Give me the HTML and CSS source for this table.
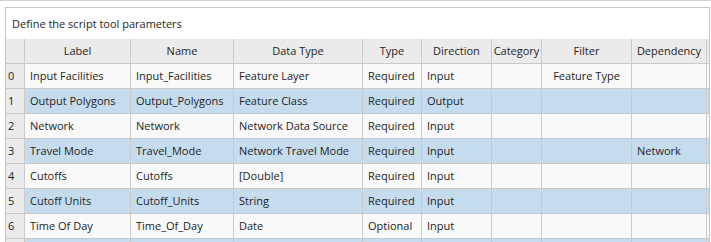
FILE: index.html
```html
<!DOCTYPE html>
<html>
<head>
<meta charset="utf-8">
<link rel="stylesheet" href="styles.css">
</head>
<body>
<div class="topline"></div>
<div class="panel">
  <div class="title">Define the script tool parameters</div>
  <div class="grid">
    <div class="row head">
      <div class="c idx"></div>
      <div class="c">Label</div>
      <div class="c">Name</div>
      <div class="c">Data Type</div>
      <div class="c">Type</div>
      <div class="c">Direction</div>
      <div class="c">Category</div>
      <div class="c">Filter</div>
      <div class="c">Dependency</div>
      <div class="c"></div>
    </div>
    <div class="row">
      <div class="c idx">0</div>
      <div class="c">Input Facilities</div>
      <div class="c">Input_Facilities</div>
      <div class="c">Feature Layer</div>
      <div class="c">Required</div>
      <div class="c">Input</div>
      <div class="c"></div>
      <div class="c ctr">Feature Type</div>
      <div class="c"></div>
      <div class="c"></div>
    </div>
    <div class="row alt">
      <div class="c idx">1</div>
      <div class="c">Output Polygons</div>
      <div class="c">Output_Polygons</div>
      <div class="c">Feature Class</div>
      <div class="c">Required</div>
      <div class="c">Output</div>
      <div class="c"></div>
      <div class="c"></div>
      <div class="c"></div>
      <div class="c"></div>
    </div>
    <div class="row">
      <div class="c idx">2</div>
      <div class="c">Network</div>
      <div class="c">Network</div>
      <div class="c">Network Data Source</div>
      <div class="c">Required</div>
      <div class="c">Input</div>
      <div class="c"></div>
      <div class="c"></div>
      <div class="c"></div>
      <div class="c"></div>
    </div>
    <div class="row alt">
      <div class="c idx">3</div>
      <div class="c">Travel Mode</div>
      <div class="c">Travel_Mode</div>
      <div class="c">Network Travel Mode</div>
      <div class="c">Required</div>
      <div class="c">Input</div>
      <div class="c"></div>
      <div class="c"></div>
      <div class="c">Network</div>
      <div class="c"></div>
    </div>
    <div class="row">
      <div class="c idx">4</div>
      <div class="c">Cutoffs</div>
      <div class="c">Cutoffs</div>
      <div class="c">[Double]</div>
      <div class="c">Required</div>
      <div class="c">Input</div>
      <div class="c"></div>
      <div class="c"></div>
      <div class="c"></div>
      <div class="c"></div>
    </div>
    <div class="row alt">
      <div class="c idx">5</div>
      <div class="c">Cutoff Units</div>
      <div class="c">Cutoff_Units</div>
      <div class="c">String</div>
      <div class="c">Required</div>
      <div class="c">Input</div>
      <div class="c"></div>
      <div class="c"></div>
      <div class="c"></div>
      <div class="c"></div>
    </div>
    <div class="row">
      <div class="c idx">6</div>
      <div class="c">Time Of Day</div>
      <div class="c">Time_Of_Day</div>
      <div class="c">Date</div>
      <div class="c">Optional</div>
      <div class="c">Input</div>
      <div class="c"></div>
      <div class="c"></div>
      <div class="c"></div>
      <div class="c"></div>
    </div>
    <div class="row alt last">
      <div class="c idx"></div>
      <div class="c"></div>
      <div class="c"></div>
      <div class="c"></div>
      <div class="c"></div>
      <div class="c"></div>
      <div class="c"></div>
      <div class="c"></div>
      <div class="c"></div>
      <div class="c"></div>
    </div>
  </div>
</div>
</body>
</html>
```

FILE: styles.css
```css
html, body {
  margin: 0;
  padding: 0;
  background: #ffffff;
}
body {
  font-family: "Open Sans", "Noto Sans", sans-serif;
  font-size: 11px;
  color: #1e1e1e;
}
.topline {
  height: 1px;
  background: #d2d2d2;
}
.panel {
  margin: 6px 0 0 5px;
  width: 703px;
  height: 234px;
  overflow: hidden;
  border: 1px solid #c4c4c4;
  border-bottom: none;
  background: #ffffff;
}
.title {
  height: 31px;
  line-height: 31px;
  padding-left: 6px;
}
.grid {
  display: flex;
  flex-direction: column;
  gap: 1px;
  background: #cacaca;
}
.row {
  display: grid;
  grid-template-columns: 18px 105px 102px 128px 58px 69px 49px 89px 74px 2px;
  gap: 1px;
  height: 24px;
}
.row.last {
  height: 3px;
}
.c {
  background: #f8f9f8;
  line-height: 24px;
  padding-left: 5px;
  white-space: nowrap;
  overflow: hidden;
}
.c.idx {
  background: #ebebeb;
  padding-left: 2px;
}
.alt .c {
  background: #c5dcef;
}
.alt .c.idx {
  background: #ebebeb;
}
.head .c {
  background: #ebebeb;
  text-align: center;
  padding-left: 0;
}
.c.ctr {
  text-align: center;
  padding-left: 0;
}
```
